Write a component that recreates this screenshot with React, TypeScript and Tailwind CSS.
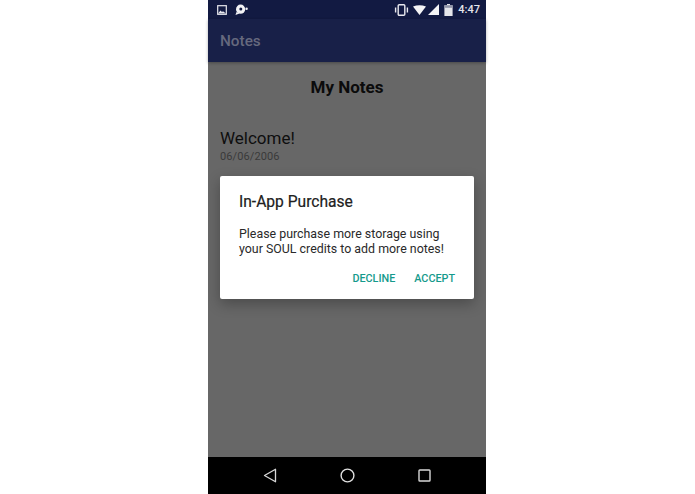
export default function App() {
  return (
    <div className="w-[695px] h-[494px] bg-white flex overflow-hidden" style={{ fontFamily: "Roboto, 'Liberation Sans', sans-serif" }}>
      <div className="ml-[208px] w-[278px] h-[494px] flex flex-col relative bg-[#676767]">
        <div className="h-[19px] shrink-0 bg-[#121a42] flex items-center pl-[9px] pr-[6px]">
          <svg width="10" height="10" viewBox="0 0 10 10" className="mr-[7px]">
            <rect x="0.7" y="0.7" width="8.6" height="8.6" fill="none" stroke="#e8e8ee" strokeWidth="1.2" />
            <path d="M1 8.5 L3.5 5.5 L5 7 L6 6.3 L9 8.5 Z" fill="#e8e8ee" />
          </svg>
          <svg width="13" height="12" viewBox="0 0 13 12" className="ml-[1px]">
            <circle cx="5.6" cy="5.2" r="4.6" fill="#f2f2f5" />
            <circle cx="5.8" cy="5" r="1.5" fill="#121a42" />
            <path d="M1.5 8 L0.5 11 L4.5 9.5 Z" fill="#f2f2f5" />
            <circle cx="11.6" cy="4.8" r="1.2" fill="#f2f2f5" />
          </svg>
          <div className="flex-1" />
          <svg width="15" height="12" viewBox="0 0 15 12" className="mr-[4px]">
            <rect x="4.2" y="0.8" width="6.6" height="10.4" rx="1" fill="none" stroke="#e8e8ee" strokeWidth="1.4" />
            <path d="M1.6 3.5 V8.5 M13.4 3.5 V8.5" stroke="#e8e8ee" strokeWidth="1.4" />
          </svg>
          <svg width="13" height="10" viewBox="0 0 13 10" className="mr-[2px]">
            <path d="M0 1.6 Q6.5 -1.2 13 1.6 L6.5 10 Z" fill="#f4f4f6" />
          </svg>
          <svg width="11" height="11" viewBox="0 0 11 11" className="mr-[5px]">
            <path d="M11 0 V11 H0 Z" fill="#f4f4f6" />
          </svg>
          <svg width="9" height="12" viewBox="0 0 9 12" className="mr-[5px]">
            <path d="M3 0 H6 V1.2 H8.6 V12 H0.4 V1.2 H3 Z" fill="#e4e5ea" />
            <rect x="0.4" y="1.2" width="8.2" height="2.6" fill="#8f93a6" />
          </svg>
          <span className="text-[11px] font-medium leading-none text-[#e4e5ea]">4:47</span>
        </div>
        <div className="h-[43px] shrink-0 bg-[#182048] flex items-center pl-[12px] pt-[1px] shadow-[0_1px_3px_rgba(0,0,0,0.3)] z-10">
          <span className="text-[15.3px] font-medium text-[#66697e]">Notes</span>
        </div>
        <div className="flex-1 flex flex-col px-[12px]">
          <div className="text-center text-[17px] font-bold text-[#0b0b0b] leading-[21px] mt-[15px]">My Notes</div>
          <div className="text-[17px] text-[#0e0e0e] leading-[21px] mt-[30px]">Welcome!</div>
          <div className="text-[11px] tracking-[0.1px] text-[#3a3a3a] leading-[13px] mt-[1px]">06/06/2006</div>
        </div>
        <div className="h-[37px] shrink-0 bg-black flex items-center justify-center gap-[63px]">
          <svg width="14" height="15" viewBox="0 0 14 15" className="-ml-px">
            <path d="M12.5 1.2 V13.8 L1.5 7.5 Z" fill="none" stroke="#d8d8d8" strokeWidth="1.3" strokeLinejoin="round" />
          </svg>
          <svg width="15" height="15" viewBox="0 0 15 15">
            <circle cx="7.5" cy="7.5" r="6.4" fill="none" stroke="#e0e0e0" strokeWidth="1.4" />
          </svg>
          <svg width="13" height="13" viewBox="0 0 13 13">
            <rect x="1" y="1" width="11" height="11" rx="0.8" fill="none" stroke="#d8d8d8" strokeWidth="1.4" />
          </svg>
        </div>
        <div className="absolute left-[12px] top-[176px] w-[254px] h-[123px] bg-white rounded-[2px] shadow-[0_5px_14px_rgba(0,0,0,0.28)] flex flex-col pl-[19px] pr-[19px]">
          <div className="text-[15.6px] text-[#212121] leading-[19px] mt-[17px] [-webkit-text-stroke:0.2px_#212121]">In-App Purchase</div>
          <div className="text-[12.4px] text-[#2a2a2a] leading-[15px] mt-[14px] whitespace-nowrap">Please purchase more storage using<br />your SOUL credits to add more notes!</div>
          <div className="flex justify-end gap-[19px] mt-[16px] text-[10.8px] font-medium text-[#159a8c] leading-[14px]">
            <span>DECLINE</span>
            <span>ACCEPT</span>
          </div>
        </div>
      </div>
    </div>
  );
}
